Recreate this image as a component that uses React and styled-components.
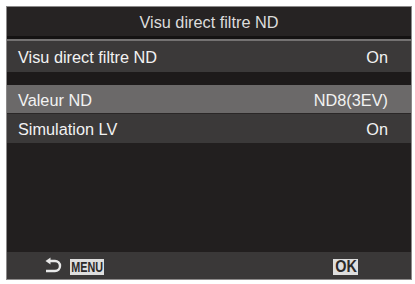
import React from "react";
import styled, { createGlobalStyle } from "styled-components";

const Global = createGlobalStyle`
  html, body { margin: 0; padding: 0; background: #fff; }
  body { font-family: "Liberation Sans", Arial, sans-serif; }
`;

const Page = styled.div`
  width: 415px;
  height: 284px;
  padding: 6px 0 0 6px;
  box-sizing: border-box;
  background: #fff;
`;

const Screen = styled.div`
  width: 406px;
  height: 274px;
  box-sizing: border-box;
  border: 1px solid #8c8a8a;
  background: #221f1f;
  display: flex;
  flex-direction: column;
  overflow: hidden;
`;

const Title = styled.div`
  flex: none;
  background: #262323;
  border-bottom: 3px solid #141212;
  color: #dcdcdc;
  font-size: 16.3px;
  display: flex;
  align-items: center;
  justify-content: center;
  padding-top: 2px;
  box-sizing: content-box;
  height: 27px;
`;

const Separator = styled.div`
  height: 2px;
  flex: none;
  background: #747272;
`;

const Row = styled.div`
  height: ${(p) => p.$h}px;
  flex: none;
  box-sizing: border-box;
  background: ${(p) => (p.$active ? "#6b6969" : "#3b3939")};
  border-bottom: ${(p) => (p.$active ? "1px solid #2a2727" : "none")};
  color: #f2f2f2;
  font-size: 16.3px;
  display: flex;
  align-items: center;
  justify-content: space-between;
  padding: 2px 23px 0 11px;
`;

const Gap = styled.div`
  height: ${(p) => p.$h}px;
  flex: none;
  background: #1d1a1a;
`;

const Body = styled.div`
  flex: 1;
  background: #221f1f;
`;

const Footer = styled.div`
  height: 27px;
  flex: none;
  background: #3a3838;
  display: flex;
  align-items: center;
  padding-left: 37px;
  padding-right: 53px;
`;

const BackGroup = styled.div`
  display: flex;
  align-items: center;
  gap: 7px;
`;

const Key = styled.span`
  display: inline-flex;
  align-items: center;
  justify-content: center;
  height: 16px;
  width: ${(p) => p.$w}px;
  background: #dedede;
  margin-top: 2px;
  overflow: hidden;
`;

const KeyText = styled.span`
  display: inline-block;
  color: #2b2929;
  font-family: "Liberation Sans", Arial, sans-serif;
  font-weight: bold;
  font-size: ${(p) => p.$fs}px;
  line-height: 1;
  transform: scaleX(${(p) => p.$sx});
`;

const Spacer = styled.div`
  flex: 1;
`;

function BackIcon() {
  return (
    <svg width="19" height="18" viewBox="0 0 19 18">
      <path
        d="M5 4 H11 A5 5 0 0 1 11 14 H2"
        fill="none"
        stroke="#e8e8e8"
        strokeWidth="2.4"
      />
      <path d="M1.5 4 L6.5 0.5 L6.5 7.5 Z" fill="#e8e8e8" />
    </svg>
  );
}

export default function App() {
  return (
    <>
      <Global />
      <Page>
        <Screen>
          <Title>Visu direct filtre ND</Title>
          <Separator />
          <Row $h={31}>
            <span>Visu direct filtre ND</span>
            <span>On</span>
          </Row>
          <Gap $h={13} />
          <Row $h={29} $active>
            <span>Valeur ND</span>
            <span>ND8(3EV)</span>
          </Row>
          <Row $h={29}>
            <span>Simulation LV</span>
            <span>On</span>
          </Row>
          <Body />
          <Footer>
            <BackGroup>
              <BackIcon />
              <Key $w={34}>
                <KeyText $fs={15} $sx={0.72}>MENU</KeyText>
              </Key>
            </BackGroup>
            <Spacer />
            <Key $w={25}>
              <KeyText $fs={16} $sx={0.9}>OK</KeyText>
            </Key>
          </Footer>
        </Screen>
      </Page>
    </>
  );
}
